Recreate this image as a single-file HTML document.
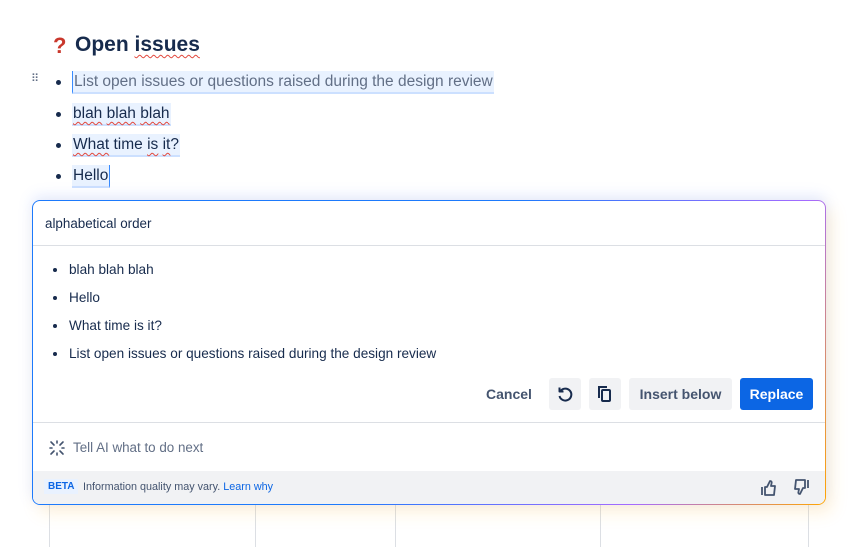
<!DOCTYPE html>
<html><head><style>
*{margin:0;padding:0;box-sizing:border-box}
body{width:853px;height:547px;background:#fff;font-family:"Liberation Sans",sans-serif;color:#172b4d;position:relative;overflow:hidden}
.a{position:absolute}
.vl{position:absolute;top:500px;height:47px;width:1px;background:#dcdfe4}
.sq{text-decoration:underline wavy #e2483d;text-decoration-thickness:1px;text-underline-offset:3px}
.li{position:absolute;left:72px;font-size:15.5px;background:#e9f2ff;border-bottom:2px solid #cce0ff;line-height:21px;padding:0 1px}
.dot{position:absolute;left:56px;width:5px;height:5px;border-radius:50%;background:#172b4d}
.sd{position:absolute;left:53px;width:4px;height:4px;border-radius:50%;background:#172b4d}
.rt{position:absolute;left:69px;font-size:13.6px;color:#172b4d}
.btn{position:absolute;top:378px;height:32px;border-radius:3px;font-size:14px;font-weight:bold;display:flex;align-items:center;justify-content:center}
</style></head><body>
<div class="vl" style="left:49px"></div><div class="vl" style="left:255px"></div><div class="vl" style="left:395px"></div><div class="vl" style="left:600px"></div><div class="vl" style="left:808px"></div>
<div class="a" style="left:53px;top:33px;font-size:22px;font-weight:bold;color:#c9372c">?</div>
<div class="a" style="left:75px;top:33px;font-size:21px;font-weight:bold;color:#172b4d">Open <span class="sq">issues</span></div>
<div class="a" style="left:31px;top:72px;font-size:11px;color:#626f86;letter-spacing:-1px">⠿</div>
<div class="dot" style="top:80px"></div><div class="li" style="top:71px;color:#626f86;border-left:1px solid #388bff">List open issues or questions raised during the design review</div>
<div class="dot" style="top:112px"></div><div class="li" style="top:103px"><span class="sq">blah</span> <span class="sq">blah</span> <span class="sq">blah</span></div>
<div class="dot" style="top:143px"></div><div class="li" style="top:134px"><span class="sq">What</span> time <span class="sq">is</span> <span class="sq">it</span>?</div>
<div class="dot" style="top:174px"></div><div class="li" style="top:165px;border-right:1px solid #388bff">Hello</div>
<div class="a" style="left:32px;top:200px;width:794px;height:305px;border-radius:8px;background:linear-gradient(120deg,#1d7afc 0%,#1d7afc 50%,#a56bff 80%,#ffa500 100%);padding:1px;box-shadow:0 -4px 14px rgba(100,140,255,.18),6px 8px 16px rgba(255,190,60,.18)">
<div style="width:100%;height:100%;background:#fff;border-radius:7px;position:relative;overflow:hidden">
<div class="a" style="left:12px;top:15px;font-size:13.4px">alphabetical order</div>
<div class="a" style="left:0;top:44px;width:100%;height:1px;background:#dcdfe4"></div>
<div class="a" style="left:0;top:221px;width:100%;height:1px;background:#dcdfe4"></div>
<div class="a" style="left:0;top:270px;width:100%;height:34px;background:#f1f2f4"></div>
<div class="a" style="left:40px;top:239px;font-size:13.4px;color:#626f86">Tell AI what to do next</div>
<svg class="a" style="left:16px;top:239px" width="16" height="16" viewBox="0 0 16 16" stroke="#44546f" stroke-width="1.6" stroke-linecap="round"><path d="M2 2l3 3M14 2l-3 3M2 14l3-3M14 14l-3-3M8 1v2M8 13v2M1 8h2M13 8h2"/></svg>
<div class="a" style="left:11px;top:278px;background:#e9f2ff;color:#0c66e4;font-size:10px;font-weight:bold;padding:2px 4px">BETA</div>
<div class="a" style="left:50px;top:280px;font-size:10.8px;color:#44546f">Information quality may vary. <span style="color:#0c66e4">Learn why</span></div>
<svg class="a" style="left:727px;top:278px" width="18" height="18" viewBox="0 0 18 18" fill="none" stroke="#44546f" stroke-width="1.8" stroke-linejoin="round"><path d="M2 8v8M5 8h2l3-6c1.5 0 2 1 1.5 2.5L11 7h4l-1 9H5z"/></svg>
<svg class="a" style="left:759px;top:277px" width="18" height="18" viewBox="0 0 18 18" fill="none" stroke="#44546f" stroke-width="1.8" stroke-linejoin="round"><path d="M16 2v8M13 10h-2l-3 6c-1.5 0-2-1-1.5-2.5L7 11H3l1-9h9z"/></svg>
</div></div>
<div class="sd" style="top:268px"></div><div class="rt" style="top:262px">blah blah blah</div>
<div class="sd" style="top:296px"></div><div class="rt" style="top:290px">Hello</div>
<div class="sd" style="top:324px"></div><div class="rt" style="top:318px">What time is it?</div>
<div class="sd" style="top:352px"></div><div class="rt" style="top:346px">List open issues or questions raised during the design review</div>
<div class="btn" style="left:478px;width:62px;color:#44546f">Cancel</div>
<div class="btn" style="left:549px;width:32px;background:#f1f2f4"><svg width="18" height="18" viewBox="0 0 18 18" fill="none" stroke="#172b4d" stroke-width="2"><path d="M4.5 6A6 6 0 1 1 3.5 11"/><path d="M3.5 2.5V6.5H7.5" stroke-linejoin="round"/></svg></div>
<div class="btn" style="left:589px;width:32px;background:#f1f2f4"><svg width="18" height="18" viewBox="0 0 18 18" fill="none" stroke="#172b4d" stroke-width="2"><path d="M3 13V2h8"/><rect x="6" y="5" width="8" height="11" rx="1"/></svg></div>
<div class="btn" style="left:629px;width:103px;background:#f1f2f4;color:#44546f">Insert below</div>
<div class="btn" style="left:740px;width:73px;background:#0c66e4;color:#fff">Replace</div>
</body></html>
